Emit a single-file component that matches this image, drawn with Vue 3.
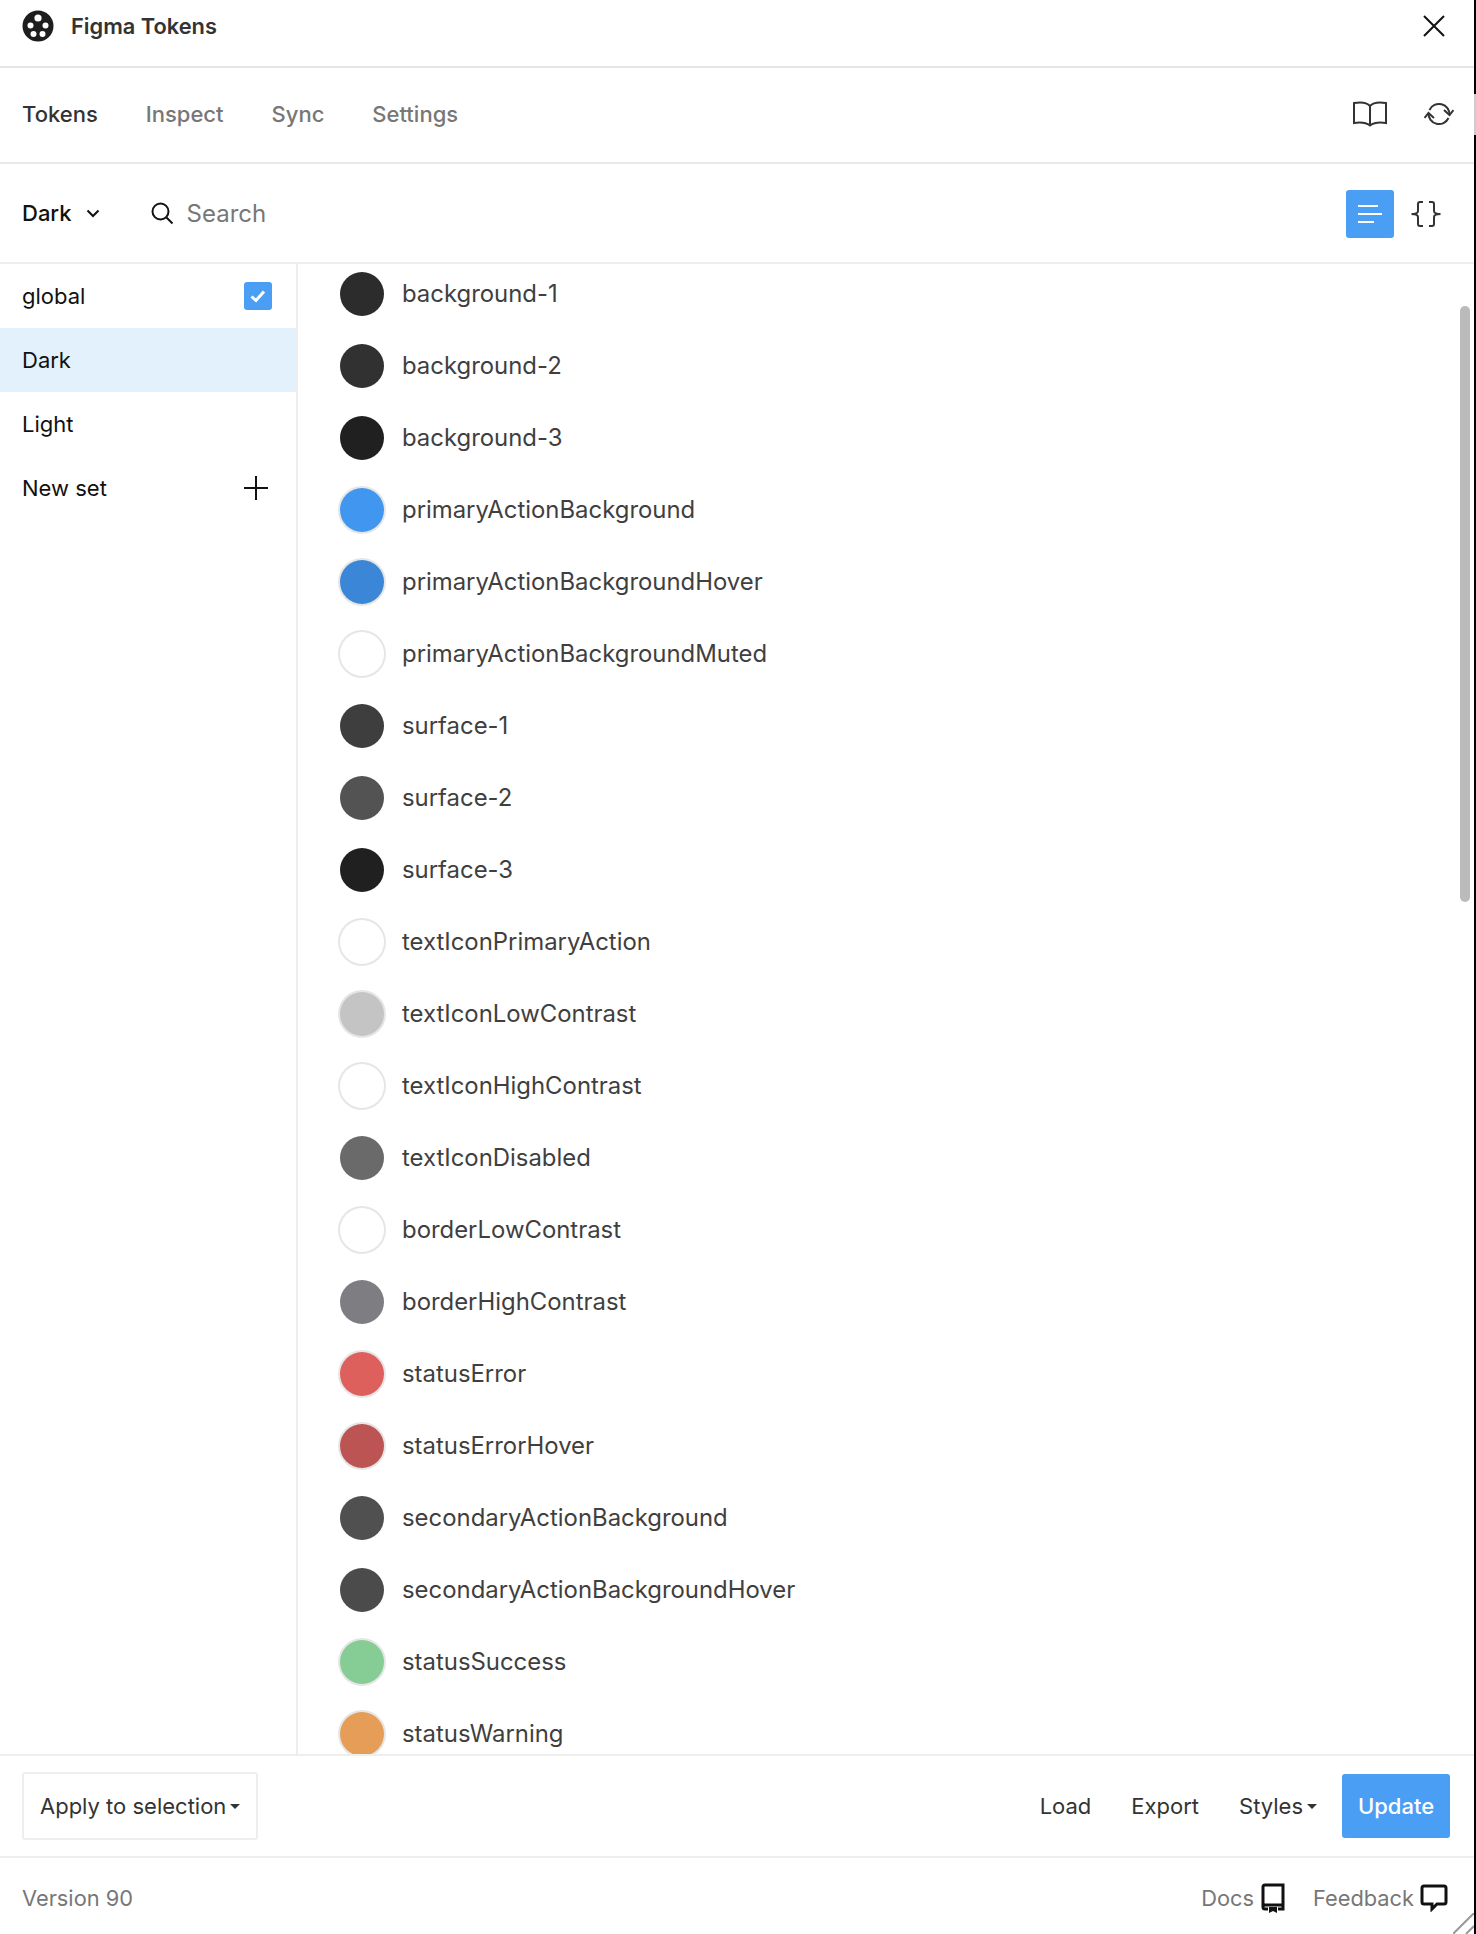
<template>
  <div class="plugin">
    <header class="title-bar">
      <div class="brand">
        <svg class="logo" width="32" height="32" viewBox="0 0 32 32">
          <circle cx="16" cy="16" r="15.500" fill="#1e1e1e" />
          <circle cx="16" cy="8" r="3.600" fill="#fff" />
          <circle cx="8.500" cy="15.500" r="3" fill="#fff" />
          <circle cx="23.500" cy="15.500" r="3" fill="#fff" />
          <circle cx="11.500" cy="24" r="3" fill="#fff" />
          <circle cx="20.500" cy="24" r="3" fill="#fff" />
        </svg>
        <span class="brand-name">Figma Tokens</span>
      </div>
      <svg class="close" width="24" height="24" viewBox="0 0 24 24" fill="none" stroke="#111" stroke-width="2">
        <path d="M2 2l20 20M22 2L2 22" />
      </svg>
    </header>

    <nav class="tabs">
      <div class="tab-list">
        <span v-for="(t, i) in tabs" :key="t" class="tab" :class="{ active: i === 0 }">{{ t }}</span>
      </div>
      <div class="tab-icons">
        <svg width="36" height="26" viewBox="0 0 36 26" fill="none" stroke="#333" stroke-width="2">
          <path d="M18 5C15 1.500 8 1 2 2v20c6-1 12-.5 16 2.500 4-3 10-3.500 16-2.500V2c-6-1-13-.5-16 3zM18 5v19" />
        </svg>
        <svg width="30" height="24" viewBox="0 0 30 24" fill="none" stroke="#333" stroke-width="2">
          <path d="M5.500 8A10.500 10.500 0 0 1 25.500 13M24.500 16A10.500 10.500 0 0 1 4.500 11" />
          <path d="M20 8l5.500 5 4-5M10 16l-5.500-5-4 5" />
        </svg>
      </div>
    </nav>

    <div class="toolbar">
      <div class="theme">
        <span>Dark</span>
        <svg width="14" height="9" viewBox="0 0 14 9" fill="none" stroke="#111" stroke-width="2"><path d="M1.500 1.500L7 7l5.500-5.500" /></svg>
      </div>
      <div class="search">
        <svg width="24" height="24" viewBox="0 0 24 24" fill="none" stroke="#111" stroke-width="2">
          <circle cx="10.500" cy="10.500" r="8" />
          <path d="M16.500 16.500l6 6" />
        </svg>
        <span>Search</span>
      </div>
      <div class="view-toggle">
        <div class="view-btn on">
          <svg width="26" height="20" viewBox="0 0 26 20" fill="none" stroke="#fff" stroke-width="2">
            <path d="M1 2h20M1 10h24M1 18h16" />
          </svg>
        </div>
        <div class="view-btn">
          <svg width="32" height="28" viewBox="0 0 32 28" fill="none" stroke="#333" stroke-width="2">
            <path d="M13 2h-3Q8 2 8 4v7q0 3-6.500 3Q8 14 8 17v7q0 2 2 2h3M19 2h3q2 0 2 2v7q0 3 6.500 3Q24 14 24 17v7q0 2-2 2h-3" />
          </svg>
        </div>
      </div>
    </div>

    <main class="body">
      <aside class="sets">
        <div class="set">
          <span>global</span>
          <span class="check">
            <svg width="16" height="14" viewBox="0 0 16 14" fill="none" stroke="#fff" stroke-width="3"><path d="M1.500 7.500L6 11.500 14 2.500" /></svg>
          </span>
        </div>
        <div class="set selected"><span>Dark</span></div>
        <div class="set"><span>Light</span></div>
        <div class="set">
          <span>New set</span>
          <svg class="plus" width="24" height="24" viewBox="0 0 24 24" fill="none" stroke="#111" stroke-width="2"><path d="M12 0v24M0 12h24" /></svg>
        </div>
      </aside>

      <section class="tokens">
        <ul class="token-list">
          <li v-for="t in tokens" :key="t.name" class="token">
            <span class="swatch" :class="{ ring: t.ring }" :style="{ background: t.color }"></span>
            <span class="token-name">{{ t.name }}</span>
          </li>
        </ul>
        <div class="scroll-thumb"></div>
      </section>
    </main>

    <div class="actions">
      <div class="apply">Apply to selection<i class="caret"></i></div>
      <div class="action-right">
        <span class="link">Load</span>
        <span class="link">Export</span>
        <span class="link">Styles<i class="caret"></i></span>
        <span class="update">Update</span>
      </div>
    </div>

    <footer class="foot">
      <span>Version 90</span>
      <div class="foot-links">
        <span class="foot-link">Docs
          <svg width="24" height="30" viewBox="0 0 24 30" fill="none" stroke="#111" stroke-width="3">
            <path d="M2 24V4q0-2 2-2h18v24h-5M7 26H4q-2 0-2-2t2-2h18" />
            <path d="M8 24h8v6l-4-2-4 2z" fill="#111" stroke="none" />
          </svg>
        </span>
        <span class="foot-link tight">Feedback
          <svg width="28" height="28" viewBox="0 0 28 28" fill="none" stroke="#111" stroke-width="3">
            <path d="M4 2h20q2 0 2 2v14q0 2-2 2h-7l-5 5v-5H4q-2 0-2-2V4q0-2 2-2z" />
          </svg>
        </span>
      </div>
      <svg class="grip" width="21" height="21" viewBox="0 0 21 21" stroke="#999" stroke-width="2">
        <path d="M0 21L21 0M13 21l8-8" />
      </svg>
    </footer>

    <div class="edge"><div class="edge-gap"></div></div>
  </div>
</template>

<script setup>
const tabs = ['Tokens', 'Inspect', 'Sync', 'Settings']

const tokens = [
  { name: 'background-1', color: '#2c2c2c' },
  { name: 'background-2', color: '#313131' },
  { name: 'background-3', color: '#202020' },
  { name: 'primaryActionBackground', color: '#4197ef', ring: true },
  { name: 'primaryActionBackgroundHover', color: '#3b86d6', ring: true },
  { name: 'primaryActionBackgroundMuted', color: '#fff', ring: true },
  { name: 'surface-1', color: '#3e3e3e' },
  { name: 'surface-2', color: '#535353' },
  { name: 'surface-3', color: '#202020' },
  { name: 'textIconPrimaryAction', color: '#fff', ring: true },
  { name: 'textIconLowContrast', color: '#c4c4c4', ring: true },
  { name: 'textIconHighContrast', color: '#fff', ring: true },
  { name: 'textIconDisabled', color: '#6a6a6a' },
  { name: 'borderLowContrast', color: '#fff', ring: true },
  { name: 'borderHighContrast', color: '#7d7d82' },
  { name: 'statusError', color: '#de605d', ring: true },
  { name: 'statusErrorHover', color: '#bb5452', ring: true },
  { name: 'secondaryActionBackground', color: '#505050' },
  { name: 'secondaryActionBackgroundHover', color: '#4b4b4b' },
  { name: 'statusSuccess', color: '#85cd95', ring: true },
  { name: 'statusWarning', color: '#e59d58', ring: true }
]
</script>

<style>
html, body { background: #fff; }
</style>

<style scoped>
.plugin { position: relative; width: 1476px; height: 1934px; display: flex; flex-direction: column; overflow: hidden; background: #fff; font-family: Inter, "Liberation Sans", sans-serif; color: #333; box-sizing: border-box; padding-right: 2px; }
.title-bar { height: 52px; padding: 0 28px 14px 22px; flex: none; display: flex; align-items: center; justify-content: space-between; border-bottom: 2px solid #e6e6e6; }
.brand { display: flex; align-items: center; gap: 17px; }
.logo { display: block; }
.brand-name { font-size: 21.800px; font-weight: 600; color: #333; }
.close { display: block; }

.tabs { flex: none; display: flex; align-items: center; justify-content: space-between; padding: 0 20px 2px 22px; box-sizing: border-box; height: 96px; border-bottom: 2px solid #e9e9e9; }
.tab-list { display: flex; gap: 48px; }
.tab { font-size: 22px; font-weight: 500; color: #777; }
.tab.active { color: #333; }
.tab-icons { display: flex; align-items: center; gap: 36px; }
.tab-icons svg { display: block; }

.toolbar { height: 98px; flex: none; display: flex; align-items: center; padding: 0 24px 0 22px; border-bottom: 2px solid #eee; }
.theme { display: flex; align-items: center; gap: 14px; font-size: 22px; font-weight: 500; color: #111; }
.search { display: flex; align-items: center; gap: 13px; margin-left: 50px; font-size: 24px; color: #777; flex: 1; }
.search svg { display: block; }
.view-toggle { display: flex; align-items: center; gap: 8px; margin-top: 2px; }
.view-btn { width: 48px; height: 48px; border-radius: 3px; display: flex; align-items: center; justify-content: center; }
.view-btn.on { background: #4a9ff5; }

.body { flex: 1; min-height: 0; display: flex; }
.sets { width: 296px; flex: none; border-right: 2px solid #eee; font-size: 22px; color: #111; }
.set { height: 64px; display: flex; align-items: center; justify-content: space-between; padding: 0 24px 0 22px; }
.set.selected { background: #e3f1fc; }
.check { width: 28px; height: 28px; background: #4a9ff5; border-radius: 3px; display: flex; align-items: center; justify-content: center; }
.plus { display: block; margin-right: 4px; }

.tokens { flex: 1; min-width: 0; position: relative; overflow: hidden; }
.token-list { list-style: none; margin: -6px 0 0; padding: 0 0 0 42px; }
.token { height: 72px; display: flex; align-items: center; gap: 18px; font-size: 23.900px; color: #3f3f3f; }
.token-name { padding-bottom: 2px; }
.swatch { width: 44px; height: 44px; border-radius: 50%; flex: none; }
.swatch.ring { box-shadow: 0 0 0 2px #e6e6e6; }
.scroll-thumb { position: absolute; top: 42px; right: 4px; width: 10px; height: 596px; border-radius: 5px; background: #bbb; }

.actions { height: 100px; flex: none; display: flex; align-items: center; justify-content: space-between; padding: 0 24px 0 22px; border-top: 2px solid #eee; border-bottom: 2px solid #eee; }
.apply { height: 64px; padding: 0 16px; display: flex; align-items: center; border: 2px solid #eee; border-radius: 3px; font-size: 22px; color: #333; }
.caret { display: inline-block; width: 0; height: 0; margin-left: 4px; border-left: 5px solid transparent; border-right: 5px solid transparent; border-top: 5px solid #333; }
.action-right { display: flex; align-items: center; font-size: 22px; }
.link { display: flex; align-items: center; margin-right: 40px; }
.link:nth-child(3) { margin-right: 25px; }
.update { width: 108px; height: 64px; display: flex; align-items: center; justify-content: center; background: #4a9ff5; color: #fff; border-radius: 3px; font-weight: 500; }

.foot { position: relative; box-sizing: border-box; height: 76px; flex: none; display: flex; align-items: center; justify-content: space-between; padding: 3px 26px 0 22px; font-size: 21.800px; color: #777; }
.foot-links { display: flex; align-items: center; gap: 28px; }
.foot-link { display: flex; align-items: center; gap: 7px; }
.foot-link.tight { gap: 6px; }
.foot-link svg { display: block; }
.grip { position: absolute; right: 0; bottom: 0; }

.edge { position: absolute; top: 0; right: 0; bottom: 0; width: 2px; background: #000; }
.edge-gap { margin-top: 94px; height: 41px; background: #ccc; }
</style>
